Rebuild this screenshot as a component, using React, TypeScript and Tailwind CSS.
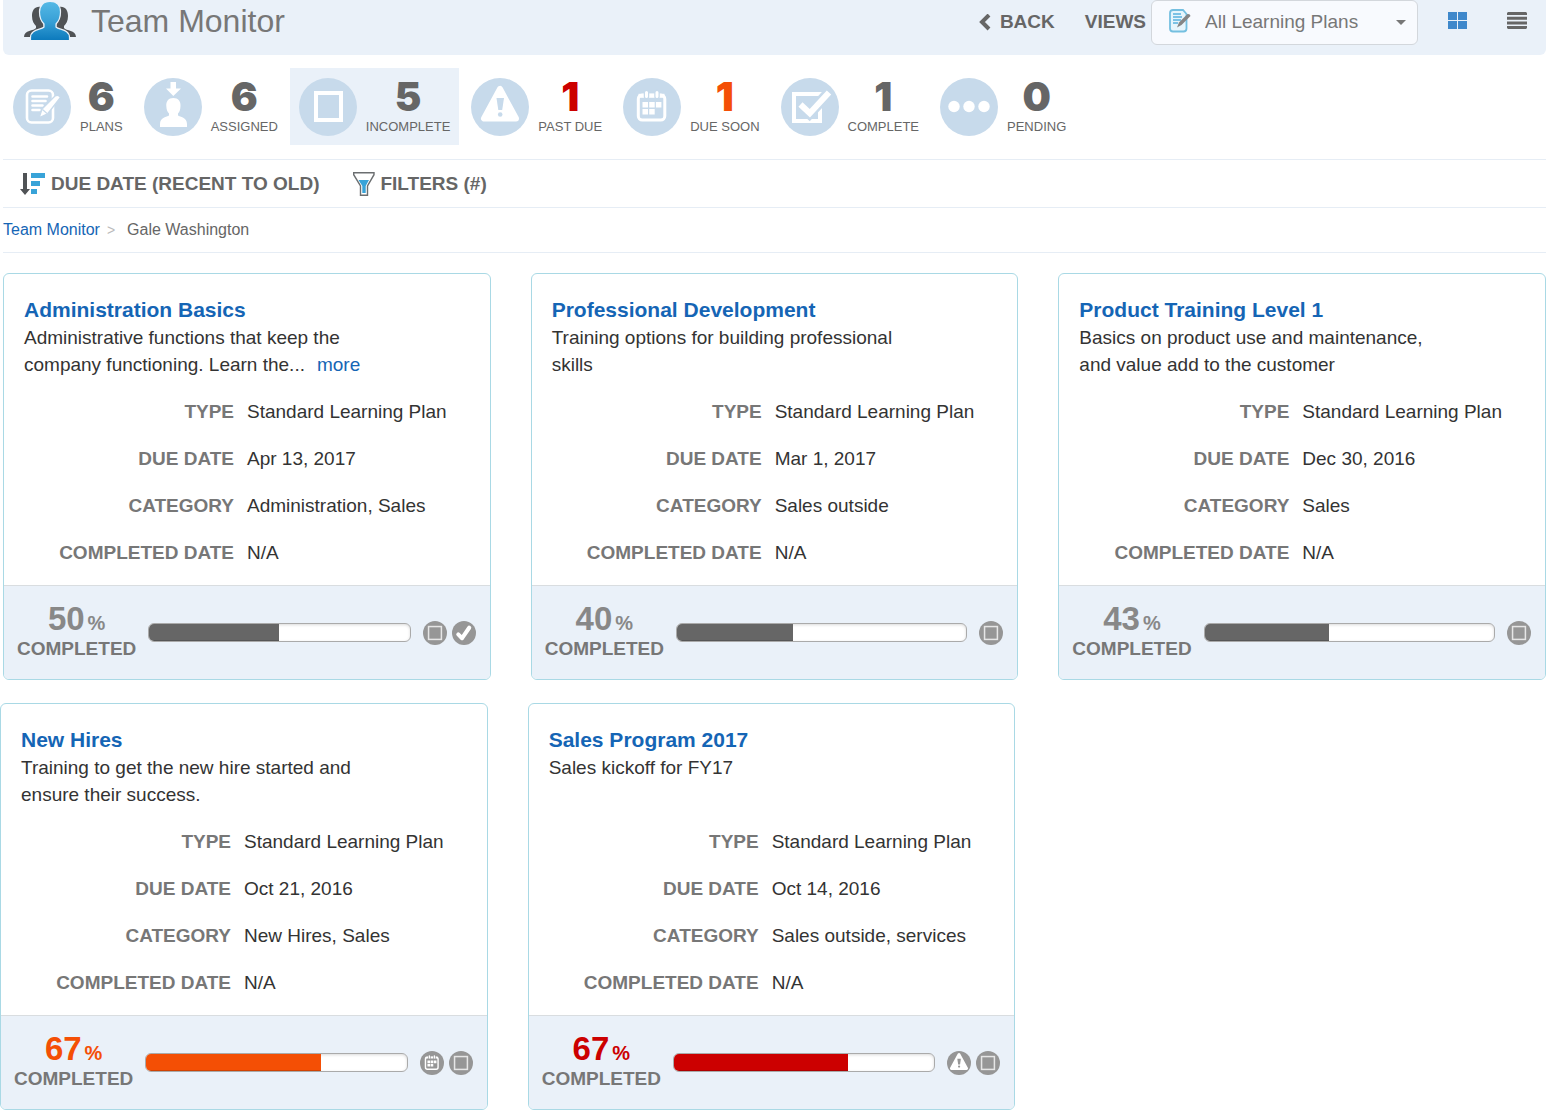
import { useState } from "react";
import { clsx } from "clsx";

type IconName = "plans" | "assigned" | "incomplete" | "pastDue" | "dueSoon" | "complete" | "pending" | "done";

const STATS: { icon: IconName; label: string; count: number; color: string }[] = [
  { icon: "plans",      label: "PLANS",      count: 6, color: "text-[#666666]" },
  { icon: "assigned",   label: "ASSIGNED",   count: 6, color: "text-[#666666]" },
  { icon: "incomplete", label: "INCOMPLETE", count: 5, color: "text-[#666666]" },
  { icon: "pastDue",    label: "PAST DUE",   count: 1, color: "text-[#cc0000]" },
  { icon: "dueSoon",    label: "DUE SOON",   count: 1, color: "text-[#f44f05]" },
  { icon: "complete",   label: "COMPLETE",   count: 1, color: "text-[#666666]" },
  { icon: "pending",    label: "PENDING",    count: 0, color: "text-[#666666]" },
];

const TONES = {
  normal:  { text: "text-[#888888]", bar: "bg-[#666666]" },
  dueSoon: { text: "text-[#f44f05]", bar: "bg-[#f44f05]" },
  pastDue: { text: "text-[#cc0000]", bar: "bg-[#cc0000]" },
};

interface Plan {
  title: string;
  description: string;
  more?: boolean;
  dueDate: string;
  category: string;
  percent: number;
  tone: keyof typeof TONES;
  badges: IconName[];
}

const TOP_PLANS: Plan[] = [
  {
    title: "Administration Basics",
    description: "Administrative functions that keep the company functioning. Learn the...",
    more: true,
    dueDate: "Apr 13, 2017",
    category: "Administration, Sales",
    percent: 50,
    tone: "normal",
    badges: ["incomplete", "done"],
  },
  {
    title: "Professional Development",
    description: "Training options for building professional skills",
    dueDate: "Mar 1, 2017",
    category: "Sales outside",
    percent: 40,
    tone: "normal",
    badges: ["incomplete"],
  },
  {
    title: "Product Training Level 1",
    description: "Basics on product use and maintenance, and value add to the customer",
    dueDate: "Dec 30, 2016",
    category: "Sales",
    percent: 43,
    tone: "normal",
    badges: ["incomplete"],
  },
];

const BOTTOM_PLANS: Plan[] = [
  {
    title: "New Hires",
    description: "Training to get the new hire started and ensure their success.",
    dueDate: "Oct 21, 2016",
    category: "New Hires, Sales",
    percent: 67,
    tone: "dueSoon",
    badges: ["dueSoon", "incomplete"],
  },
  {
    title: "Sales Program 2017",
    description: "Sales kickoff for FY17",
    dueDate: "Oct 14, 2016",
    category: "Sales outside, services",
    percent: 67,
    tone: "pastDue",
    badges: ["pastDue", "incomplete"],
  },
];

// Round icon: white drawing on a disc in the current text colour
function RoundIcon({ name, className, badge }: { name: IconName; className: string; badge?: boolean }) {
  return (
    <svg viewBox="0 0 58 58" className={className} fill="none" aria-hidden="true">
      <circle cx="29" cy="29" r="29" fill="currentColor" />
      {/* small badges fill more of their disc */}
      <g transform={badge ? "translate(-4.4 -4.4) scale(1.15)" : undefined}>
        {name === "plans" && (
          <>
            <rect x="14" y="12.5" width="26" height="32" rx="4.5" stroke="#fff" strokeWidth="2.6" />
            <path d="M19.500 18.500h14.500M19.500 23h13M19.500 27.500h10M19.500 32h7" stroke="#fff" strokeWidth="2.6" strokeLinecap="round" />
            <path d="M26 40l3-9L42 18q3.500-2 5.500 1.500L34.500 36z" fill="#fff" stroke="#c7daeb" strokeWidth="1.4" />
            <path d="M29.500 31.500l4.500 4" stroke="#c7daeb" strokeWidth="1.2" />
          </>
        )}
        {name === "assigned" && (
          <>
            <path d="M26.500 4h5.500v6.500h5L29.300 18 22 10.500h4.500z" fill="#fff" />
            <path d="M29.300 20c5 0 7.500 3.500 7.200 8-.2 4-1 6-2.500 7.500v2c2 1.500 9 1.500 9 8.500v3H16v-3c0-7 7-7 9-8.500v-2c-1.500-1.500-2.500-3.500-2.700-7.500-.2-4.500 2-8 7-8z" fill="#fff" />
          </>
        )}
        {name === "incomplete" && !badge && (
          <rect x="17" y="15" width="25" height="27" stroke="#fff" strokeWidth="4" />
        )}
        {name === "incomplete" && badge && (
          <rect x="15.500" y="15.500" width="27" height="27" stroke="#e6e6e6" strokeWidth="3.2" />
        )}
        {name === "pastDue" && (
          <>
            <path d="M29 11L13 40.500h32z" fill="#fff" stroke="#fff" strokeWidth="6" strokeLinejoin="round" />
            <path d="M25.500 20h7.500l-1.800 12h-3.900z" fill="currentColor" />
            <circle cx="29.200" cy="36.500" r="2.300" fill="currentColor" />
          </>
        )}
        {name === "dueSoon" && (
          <>
            <rect x="15.300" y="17" width="26.500" height="25" rx="4" stroke="#fff" strokeWidth="3" />
            <path d="M15.500 17.800h26" stroke="#fff" strokeWidth="4" />
            <path d="M23.500 14.500v4M34 14.500v4" stroke="currentColor" strokeWidth="5.500" strokeLinecap="round" />
            <path d="M23.500 14.500v4M34 14.500v4" stroke="#fff" strokeWidth="3" strokeLinecap="round" />
            <path d="M19.500 24h5.500v5.500h-5.500zM26.200 24h5.500v5.500h-5.500zM32.900 24h5.500v5.500h-5.500zM19.500 31h5.500v5.500h-5.500zM26.200 31h5.500v5.500h-5.500z" fill="#fff" />
          </>
        )}
        {name === "complete" && (
          <>
            <rect x="13" y="16" width="26" height="27" stroke="#fff" strokeWidth="4" />
            <path d="M19.500 27l9 8.500L47.500 15" stroke="currentColor" strokeWidth="11" />
            <path d="M19.500 26.500l9.300 8.700L48 14.500" stroke="#fff" strokeWidth="6" />
          </>
        )}
        {name === "pending" && (
          <g fill="#fff">
            <circle cx="14" cy="28.500" r="5.700" />
            <circle cx="29" cy="28.500" r="5.700" />
            <circle cx="44" cy="28.500" r="5.700" />
          </g>
        )}
        {name === "done" && (
          <path d="M17 32l8 8L40 18" stroke="#fff" strokeWidth="8.500" strokeLinecap="round" strokeLinejoin="round" />
        )}
      </g>
    </svg>
  );
}

function TeamLogo() {
  return (
    <svg viewBox="0 0 52 38" className="h-[38px] w-[52px]" aria-hidden="true">
      <defs>
        <linearGradient id="team-blue" x1="0" y1="0" x2="0" y2="1">
          <stop offset="0" stopColor="#55b9e6" />
          <stop offset="0.5" stopColor="#38a0d6" />
          <stop offset="1" stopColor="#0a78bb" />
        </linearGradient>
      </defs>
      <g fill="#505356">
        <path d="M17 5c-6-1-9 3-9 9 0 5 2 8 4 10v2c-2 3-12 2-12 9h8l12-8z" />
        <path d="M35 5c6-1 9 3 9 9 0 5-2 8-4 10v2c2 3 12 2 12 9h-8l-12-8z" />
      </g>
      <path
        d="M26-.5c7 0 10.500 4.500 10.500 10.500 0 6-1.500 9-4.500 12v3c3 3 13.500 2 13.500 10.500V39H6.500v-3.500C6.500 27 17 28 20 25v-3c-3-3-4.500-6-4.500-12C15.500 4 19-.5 26-.5z"
        fill="url(#team-blue)"
        stroke="#eaf1f9"
        strokeWidth="1.200"
      />
    </svg>
  );
}

function PlanDocIcon({ className }: { className: string }) {
  return (
    <svg viewBox="0 0 22 24" className={className} fill="none" aria-hidden="true">
      <path d="M4 1h10l3.500 4v14.500q0 3-3 3H4q-3 0-3-3V4q0-3 3-3z" fill="#e6f5fc" stroke="#74bfe0" strokeWidth="1.800" />
      <path d="M4 5h8M4 8h9M4 11h8M4 14h5" stroke="#58b1dd" strokeWidth="1.400" />
      <path d="M8 18.500l2-5L18.500 5q2.500-.5 3 2L12.500 16z" fill="#858585" />
    </svg>
  );
}

function SortIcon() {
  return (
    <svg viewBox="0 0 26 24" className="h-6 w-[26px]" aria-hidden="true">
      <path d="M3 1h4v16h3l-5 6-5-6h3z" fill="#505356" />
      <path d="M11 1h14v5H11zM11 9h9v5h-9zM11 17h6v5h-6z" fill="#38a3d8" />
    </svg>
  );
}

function FilterIcon() {
  return (
    <svg viewBox="0 0 22 24" className="h-6 w-[22px]" aria-hidden="true">
      <path d="M.7.700h20.300v2L14.500 14v9.300H7.500V14L.7 2.700z" fill="#fff" stroke="#6b6e70" strokeWidth="1.400" />
      <path d="M5.500 8h10.500l-3.300 6v7H9.300v-7z" fill="#38a3d8" />
    </svg>
  );
}

function PlanCard({ plan }: { plan: Plan }) {
  const tone = TONES[plan.tone];
  const rows = [
    ["TYPE", "Standard Learning Plan"],
    ["DUE DATE", plan.dueDate],
    ["CATEGORY", plan.category],
    ["COMPLETED DATE", "N/A"],
  ];

  return (
    <article className="flex flex-col overflow-hidden rounded-md border border-[#a9d9e5] bg-white">
      <div className="px-5 pt-[22px] pb-[19px] text-[19px] leading-[27px]">
        <h2 className="text-[21px] leading-7 font-bold text-[#1565b5]">
          <a href="#plan">{plan.title}</a>
        </h2>
        <p className="min-h-[54px] max-w-[350px]">
          {plan.description}
          {plan.more && <a href="#more" className="ml-3 text-[#1565b5]">more</a>}
        </p>
        <dl className="mt-5 flex flex-col gap-5">
          {rows.map(([label, value]) => (
            <div key={label} className="flex gap-[13px]">
              <dt className="w-[210px] shrink-0 text-right font-bold text-[#777777]">{label}</dt>
              <dd>{value}</dd>
            </div>
          ))}
        </dl>
      </div>

      <footer className="flex h-[94px] items-center gap-3 border-t border-[#d9dde0] bg-[#eaf1f9] pr-3.5 pl-[13px]">
        <div className="text-center font-bold">
          <div className={clsx("flex items-baseline justify-center gap-[3px] leading-7", tone.text)}>
            <span className="text-[33px]">{plan.percent}</span>
            <span className="text-[20px]">%</span>
          </div>
          <div className="text-[19px] leading-6 text-[#777777]">COMPLETED</div>
        </div>
        <div
          role="progressbar"
          aria-label={`${plan.title} progress`}
          aria-valuenow={plan.percent}
          className="h-[19px] flex-1 overflow-hidden rounded-md border border-[#aaaaaa] bg-white shadow-[inset_0_1px_3px_rgba(0,0,0,0.15)]"
        >
          <div
            className={clsx("h-full shadow-[inset_0_-1px_0_rgba(0,0,0,0.15)]", tone.bar)}
            style={{ width: `${plan.percent}%` }}
          />
        </div>
        <div className="flex gap-[5px]">
          {plan.badges.map((badge) => (
            <RoundIcon key={badge} name={badge} badge className="h-6 w-6 text-[#969696]" />
          ))}
        </div>
      </footer>
    </article>
  );
}

export default function App() {
  const [active, setActive] = useState<IconName>("incomplete");

  return (
    <div className="min-h-screen bg-white font-['Liberation_Sans',Arial,sans-serif] text-[#333333]">
      <div className="pl-[3px]">
        <header className="flex items-start justify-between rounded-b-md bg-[#eaf1f9] pr-[19px] pb-2.5 pl-[21px] text-[19px] text-[#666666]">
          <div className="flex h-[42px] items-center gap-[15px]">
            <TeamLogo />
            <h1 className="text-[32px] leading-10 text-[#777777]">Team Monitor</h1>
          </div>
          <div className="flex items-center">
            <button type="button" className="flex items-center gap-2 font-bold">
              <svg viewBox="0 0 14 18" className="h-[18px] w-3.5" fill="none" aria-hidden="true">
                <path d="M11 1L4 8l7 7" stroke="currentColor" strokeWidth="4" />
              </svg>
              BACK
            </button>
            <label htmlFor="views" className="ml-[30px] font-bold">VIEWS</label>
            <div className="relative ml-[5px]">
              <PlanDocIcon className="pointer-events-none absolute top-[9px] left-4 h-6 w-[26px]" />
              <select
                id="views"
                className="h-[45px] w-[267px] appearance-none rounded-md border border-[#d3d7dc] bg-[#f8fafe] pl-[53px] text-[#777777]"
              >
                <option>All Learning Plans</option>
              </select>
              <svg viewBox="0 0 10 5" className="pointer-events-none absolute top-5 right-3 h-[5px] w-2.5" aria-hidden="true">
                <path d="M0 0h10L5 5z" fill="#777777" />
              </svg>
            </div>
            <button type="button" aria-label="Grid view" className="mb-1 ml-[30px]">
              <svg viewBox="0 0 19 17" className="h-[17px] w-[19px]" aria-hidden="true">
                <path d="M0 0h9v8H0zM10 0h9v8h-9zM0 9h9v8H0zM10 9h9v8h-9z" fill="#3f88cb" />
              </svg>
            </button>
            <button type="button" aria-label="List view" className="mb-1 ml-10">
              <svg viewBox="0 0 20 17" className="h-[17px] w-5" aria-hidden="true">
                <path d="M1 0h18l1 1v2H0V1zM0 4.700h20v3H0zM0 9.400h20v3H0zM0 14h20v2l-1 1H1l-1-1z" fill="#666666" />
              </svg>
            </button>
          </div>
        </header>

        <nav className="mt-[13px] flex flex-wrap gap-[3px] pl-px">
          {STATS.map((stat) => (
            <button
              key={stat.label}
              type="button"
              onClick={() => setActive(stat.icon)}
              className={clsx(
                "flex h-[77px] items-center gap-[9px] px-[9px]",
                active === stat.icon && "bg-[#eaf1f9]",
              )}
            >
              <RoundIcon name={stat.icon} className="h-[58px] w-[58px] text-[#c7daeb]" />
              <span className="flex flex-col items-center">
                <span className={clsx("font-['Inter',sans-serif] text-[40px] leading-10 font-black", stat.color)}>
                  {stat.count}
                </span>
                <span className="text-[13px] leading-5 text-[#666666]">{stat.label}</span>
              </span>
            </button>
          ))}
        </nav>

        <div className="mt-3.5 flex h-12 items-center gap-[34px] border-t border-[#e6edf5] pt-px pl-[17px] text-[19px] font-bold text-[#666666]">
          <button type="button" className="flex items-center gap-[5px]">
            <SortIcon />
            DUE DATE (RECENT TO OLD)
          </button>
          <button type="button" className="flex items-center gap-[5px]">
            <FilterIcon />
            FILTERS (#)
          </button>
        </div>

        <div className="flex h-[46px] items-center border-y border-[#e6edf5] text-base">
          <a href="#team" className="text-[#1565b5]">Team Monitor</a>
          <span className="ml-[7px] text-sm text-[#bbbbbb]">&gt;</span>
          <span className="ml-3 text-[#666666]">Gale Washington</span>
        </div>
      </div>

      <main className="mt-5 flex flex-col gap-[23px]">
        <div className="grid grid-cols-3 gap-10 pl-[3px]">
          {TOP_PLANS.map((plan) => <PlanCard key={plan.title} plan={plan} />)}
        </div>
        <div className="grid grid-cols-3 gap-10 pr-[3px]">
          {BOTTOM_PLANS.map((plan) => <PlanCard key={plan.title} plan={plan} />)}
        </div>
      </main>
    </div>
  );
}
